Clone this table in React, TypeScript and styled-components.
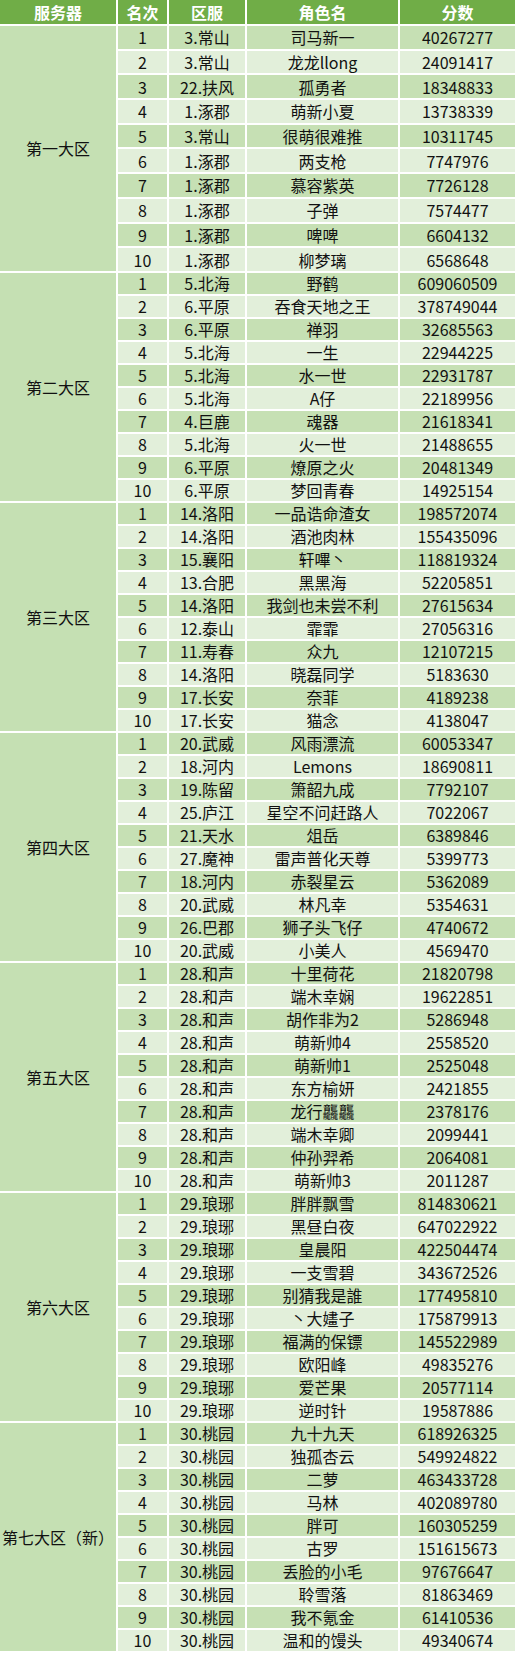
import React from 'react';
import styled, { createGlobalStyle } from 'styled-components';

const GlobalStyle = createGlobalStyle`
  html, body {
    margin: 0;
    padding: 0;
    background: #fff;
  }
  body {
    font-family: 'Microsoft YaHei', 'Noto Sans CJK SC', 'Noto Sans', sans-serif;
  }
`;

const columns = '116px 49px 76px 151px 1fr';

const Board = styled.div`
  display: flex;
  flex-direction: column;
  gap: 2px;
  width: 515px;
  padding-bottom: 2px;
  background: #fff;
  color: #111;
  font-size: 16px;
`;

const HeaderRow = styled.div`
  display: grid;
  grid-template-columns: ${columns};
  height: 24px;
  gap: 2px;
`;

const HeadCell = styled.div`
  display: flex;
  align-items: center;
  justify-content: center;
  background: #70ad47;
  color: #fff;
  font-weight: bold;
  font-size: 16px;
  line-height: 1;
`;

const GroupBlock = styled.div<{ $rowHeight: number }>`
  display: grid;
  grid-template-columns: ${columns};
  grid-auto-rows: ${p => p.$rowHeight}px;
  gap: 2px;
`;

const GroupCell = styled.div<{ $rows: number }>`
  grid-column: 1;
  grid-row: span ${p => p.$rows};
  display: flex;
  align-items: center;
  justify-content: center;
  background: #c5e0b3;
  line-height: 1;
`;

const Cell = styled.div<{ $band: boolean }>`
  display: flex;
  align-items: center;
  justify-content: center;
  background: ${p => (p.$band ? '#c6e0b4' : '#e2efda')};
  line-height: 1;
  white-space: nowrap;
`;

type Entry = [string, string, string];

interface Group {
  name: string;
  rowHeight: number;
  rows: Entry[];
}

const groups: Group[] = [
  {
    name: '第一大区',
    rowHeight: 22.7,
    rows: [
      ['3.常山', '司马新一', '40267277'],
      ['3.常山', '龙龙llong', '24091417'],
      ['22.扶风', '孤勇者', '18348833'],
      ['1.涿郡', '萌新小夏', '13738339'],
      ['3.常山', '很萌很难推', '10311745'],
      ['1.涿郡', '两支枪', '7747976'],
      ['1.涿郡', '慕容紫英', '7726128'],
      ['1.涿郡', '子弹', '7574477'],
      ['1.涿郡', '啤啤', '6604132'],
      ['1.涿郡', '柳梦璃', '6568648'],
    ],
  },
  {
    name: '第二大区',
    rowHeight: 21,
    rows: [
      ['5.北海', '野鹤', '609060509'],
      ['6.平原', '吞食天地之王', '378749044'],
      ['6.平原', '禅羽', '32685563'],
      ['5.北海', '一生', '22944225'],
      ['5.北海', '水一世', '22931787'],
      ['5.北海', 'A仔', '22189956'],
      ['4.巨鹿', '魂器', '21618341'],
      ['5.北海', '火一世', '21488655'],
      ['6.平原', '燎原之火', '20481349'],
      ['6.平原', '梦回青春', '14925154'],
    ],
  },
  {
    name: '第三大区',
    rowHeight: 21,
    rows: [
      ['14.洛阳', '一品诰命渣女', '198572074'],
      ['14.洛阳', '酒池肉林', '155435096'],
      ['15.襄阳', '轩嗶丶', '118819324'],
      ['13.合肥', '黑黑海', '52205851'],
      ['14.洛阳', '我剑也未尝不利', '27615634'],
      ['12.泰山', '霏霏', '27056316'],
      ['11.寿春', '众九', '12107215'],
      ['14.洛阳', '晓磊同学', '5183630'],
      ['17.长安', '奈菲', '4189238'],
      ['17.长安', '猫念', '4138047'],
    ],
  },
  {
    name: '第四大区',
    rowHeight: 21,
    rows: [
      ['20.武威', '风雨漂流', '60053347'],
      ['18.河内', 'Lemons', '18690811'],
      ['19.陈留', '箫韶九成', '7792107'],
      ['25.庐江', '星空不问赶路人', '7022067'],
      ['21.天水', '俎岳', '6389846'],
      ['27.魔神', '雷声普化天尊', '5399773'],
      ['18.河内', '赤裂星云', '5362089'],
      ['20.武威', '林凡幸', '5354631'],
      ['26.巴郡', '狮子头飞仔', '4740672'],
      ['20.武威', '小美人', '4569470'],
    ],
  },
  {
    name: '第五大区',
    rowHeight: 21,
    rows: [
      ['28.和声', '十里荷花', '21820798'],
      ['28.和声', '端木幸娴', '19622851'],
      ['28.和声', '胡作非为2', '5286948'],
      ['28.和声', '萌新帅4', '2558520'],
      ['28.和声', '萌新帅1', '2525048'],
      ['28.和声', '东方榆妍', '2421855'],
      ['28.和声', '龙行龘龘', '2378176'],
      ['28.和声', '端木幸卿', '2099441'],
      ['28.和声', '仲孙羿希', '2064081'],
      ['28.和声', '萌新帅3', '2011287'],
    ],
  },
  {
    name: '第六大区',
    rowHeight: 21,
    rows: [
      ['29.琅琊', '胖胖飘雪', '814830621'],
      ['29.琅琊', '黑昼白夜', '647022922'],
      ['29.琅琊', '皇晨阳', '422504474'],
      ['29.琅琊', '一支雪碧', '343672526'],
      ['29.琅琊', '别猜我是誰', '177495810'],
      ['29.琅琊', '丶大嫿子', '175879913'],
      ['29.琅琊', '福满的保镖', '145522989'],
      ['29.琅琊', '欧阳峰', '49835276'],
      ['29.琅琊', '爱芒果', '20577114'],
      ['29.琅琊', '逆时针', '19587886'],
    ],
  },
  {
    name: '第七大区（新）',
    rowHeight: 21,
    rows: [
      ['30.桃园', '九十九天', '618926325'],
      ['30.桃园', '独孤杏云', '549924822'],
      ['30.桃园', '二萝', '463433728'],
      ['30.桃园', '马林', '402089780'],
      ['30.桃园', '胖可', '160305259'],
      ['30.桃园', '古罗', '151615673'],
      ['30.桃园', '丢脸的小毛', '97676647'],
      ['30.桃园', '聆雪落', '81863469'],
      ['30.桃园', '我不氪金', '61410536'],
      ['30.桃园', '温和的馒头', '49340674'],
    ],
  },
];

const headers = ['服务器', '名次', '区服', '角色名', '分数'];

const App: React.FC = () => {
  return (
    <>
      <GlobalStyle />
      <Board>
        <HeaderRow>
          {headers.map(h => (
            <HeadCell key={h}>{h}</HeadCell>
          ))}
        </HeaderRow>
        {groups.map(group => (
          <GroupBlock key={group.name} $rowHeight={group.rowHeight}>
            <GroupCell $rows={group.rows.length}>{group.name}</GroupCell>
            {group.rows.map(([zone, role, score], i) => {
              const band = i % 2 === 0;
              return (
                <React.Fragment key={i}>
                  <Cell $band={band}>{i + 1}</Cell>
                  <Cell $band={band}>{zone}</Cell>
                  <Cell $band={band}>{role}</Cell>
                  <Cell $band={band}>{score}</Cell>
                </React.Fragment>
              );
            })}
          </GroupBlock>
        ))}
      </Board>
    </>
  );
};

export default App;
